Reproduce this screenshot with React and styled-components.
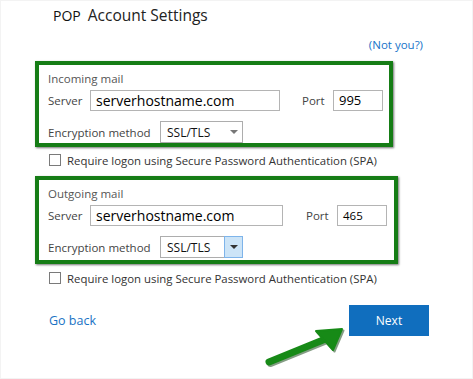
import React from "react";
import styled, { createGlobalStyle } from "styled-components";

const GlobalStyle = createGlobalStyle`
  html, body {
    margin: 0;
    padding: 0;
    background: #ffffff;
  }
  body {
    font-family: "Open Sans", "Noto Sans", sans-serif;
  }
`;

const Page = styled.div`
  position: relative;
  width: 473px;
  height: 379px;
  box-sizing: border-box;
  border: 1px solid #f3f3f3;
  padding: 0 0 0 34px;
  overflow: hidden;
`;

const TitleRow = styled.div`
  display: flex;
  align-items: baseline;
  gap: 7px;
  height: 30px;
  padding: 0 0 0 18px;
  line-height: 28px;
`;

const Protocol = styled.span`
  font-size: 14px;
  color: #111;
`;

const Title = styled.span`
  font-size: 15.5px;
  color: #222;
`;

const NotYouRow = styled.div`
  display: flex;
  justify-content: flex-end;
  width: 388px;
  height: 27px;
  align-items: center;
`;

const Link = styled.a`
  font-size: 11.5px;
  color: #1673c9;
  text-decoration: none;
  cursor: pointer;
`;

const Box = styled.section`
  box-sizing: border-box;
  width: ${(p) => p.$width}px;
  border: 4px solid #167d16;
  box-shadow: 1px 1px 2px rgba(0, 0, 0, 0.55);
  padding: 4px 10px 0 9px;
  height: ${(p) => p.$height}px;
  display: flex;
  flex-direction: column;
  margin-top: ${(p) => p.$top}px;
`;

const BoxTitle = styled.div`
  font-size: 11.5px;
  color: #555;
  height: 20px;
  line-height: 20px;
`;

const Row = styled.div`
  display: flex;
  align-items: center;
  height: 22px;
  margin-top: ${(p) => p.$gap || 0}px;
`;

const Label = styled.span`
  font-size: 11.5px;
  color: #444;
  width: ${(p) => p.$width}px;
  flex: none;
`;

const TextBox = styled.div`
  box-sizing: border-box;
  width: ${(p) => p.$width}px;
  height: 21px;
  border: 1px solid #b4b4b4;
  padding-left: 5px;
  display: flex;
  align-items: center;
  font-size: ${(p) => p.$size}px;
  color: #000;
  flex: none;
`;

const Select = styled.div`
  box-sizing: border-box;
  width: 83px;
  height: 22px;
  border: 1px solid #adadad;
  display: flex;
  align-items: stretch;
  font-size: 12px;
  color: #111;
  flex: none;
`;

const SelectValue = styled.span`
  flex: 1;
  display: flex;
  align-items: center;
  padding-left: 6px;
`;

const SelectArrow = styled.span`
  width: 17px;
  display: flex;
  align-items: center;
  justify-content: center;
  background: ${(p) => (p.$focus ? "#cce4f7" : "transparent")};
  margin: ${(p) => (p.$focus ? "-1px -1px -1px 0" : "0")};
  border: ${(p) => (p.$focus ? "1px solid #7eb4ea" : "none")};
  &::after {
    content: "";
    border-left: 4px solid transparent;
    border-right: 4px solid transparent;
    border-top: 4px solid ${(p) => (p.$focus ? "#333" : "#777")};
  }
`;

const Spacer = styled.span`
  width: ${(p) => p.$w}px;
  flex: none;
`;

const CheckRow = styled.label`
  display: flex;
  align-items: center;
  gap: 6px;
  height: 14px;
  margin: ${(p) => p.$top}px 0 0 14px;
  font-size: 11.4px;
  color: #333;
`;

const CheckBox = styled.span`
  box-sizing: border-box;
  width: 12px;
  height: 12px;
  border: 1px solid #7a7a7a;
  background: #fff;
`;

const Footer = styled.div`
  display: flex;
  align-items: center;
  justify-content: space-between;
  width: 380px;
  margin: 20px 0 0 14px;
`;

const BackLink = styled(Link)`
  font-size: 12.5px;
  color: #1a72c4;
`;

const NextButton = styled.button`
  width: 80px;
  height: 31px;
  border: none;
  background: #106ebe;
  color: #fff;
  font-family: inherit;
  font-size: 12px;
`;

const Arrow = styled.svg`
  position: absolute;
  left: 0;
  top: 0;
  pointer-events: none;
`;

const MailBox = ({ title, port, portSize, width, height, top, serverWidth, portGap, focus }) => (
  <Box $width={width} $height={height} $top={top}>
    <BoxTitle>{title}</BoxTitle>
    <Row>
      <Label $width={42}>Server</Label>
      <TextBox $width={serverWidth} $size={14}>serverhostname.com</TextBox>
      <Spacer $w={portGap} />
      <Label $width={31}>Port</Label>
      <TextBox $width={50} $size={portSize}>{port}</TextBox>
    </Row>
    <Row $gap={10}>
      <Label $width={112}>Encryption method</Label>
      <Select>
        <SelectValue>SSL/TLS</SelectValue>
        <SelectArrow $focus={focus} />
      </Select>
    </Row>
  </Box>
);

export default function App() {
  return (
    <>
      <GlobalStyle />
      <Page>
        <TitleRow>
          <Protocol>POP</Protocol>
          <Title>Account Settings</Title>
        </TitleRow>
        <NotYouRow>
          <Link>(Not you?)</Link>
        </NotYouRow>
        <MailBox
          title="Incoming mail"
          port="995"
          portSize={13}
          width={358}
          height={86}
          top={3}
          serverWidth={190}
          portGap={22}
        />
        <CheckRow $top={6}>
          <CheckBox />
          Require logon using Secure Password Authentication (SPA)
        </CheckRow>
        <MailBox
          title="Outgoing mail"
          port="465"
          portSize={11.5}
          width={363}
          height={88}
          top={9}
          serverWidth={193}
          portGap={23}
          focus
        />
        <CheckRow $top={7}>
          <CheckBox />
          Require logon using Secure Password Authentication (SPA)
        </CheckRow>
        <Footer>
          <BackLink>Go back</BackLink>
          <NextButton>Next</NextButton>
        </Footer>
        <Arrow width="473" height="379" viewBox="0 0 473 379">
          <g transform="translate(1.5,1.5)" fill="#0b3d0b" stroke="#0b3d0b" opacity="0.5">
            <line x1="268" y1="361" x2="322" y2="339" strokeWidth="7" strokeLinecap="round" />
            <polygon points="315,330 341,328 332,349" strokeWidth="2" strokeLinejoin="round" />
          </g>
          <g fill="#178a17" stroke="#178a17">
            <line x1="268" y1="361" x2="322" y2="339" strokeWidth="7" strokeLinecap="round" />
            <polygon points="315,330 341,328 332,349" strokeWidth="2" strokeLinejoin="round" />
          </g>
        </Arrow>
      </Page>
    </>
  );
}
